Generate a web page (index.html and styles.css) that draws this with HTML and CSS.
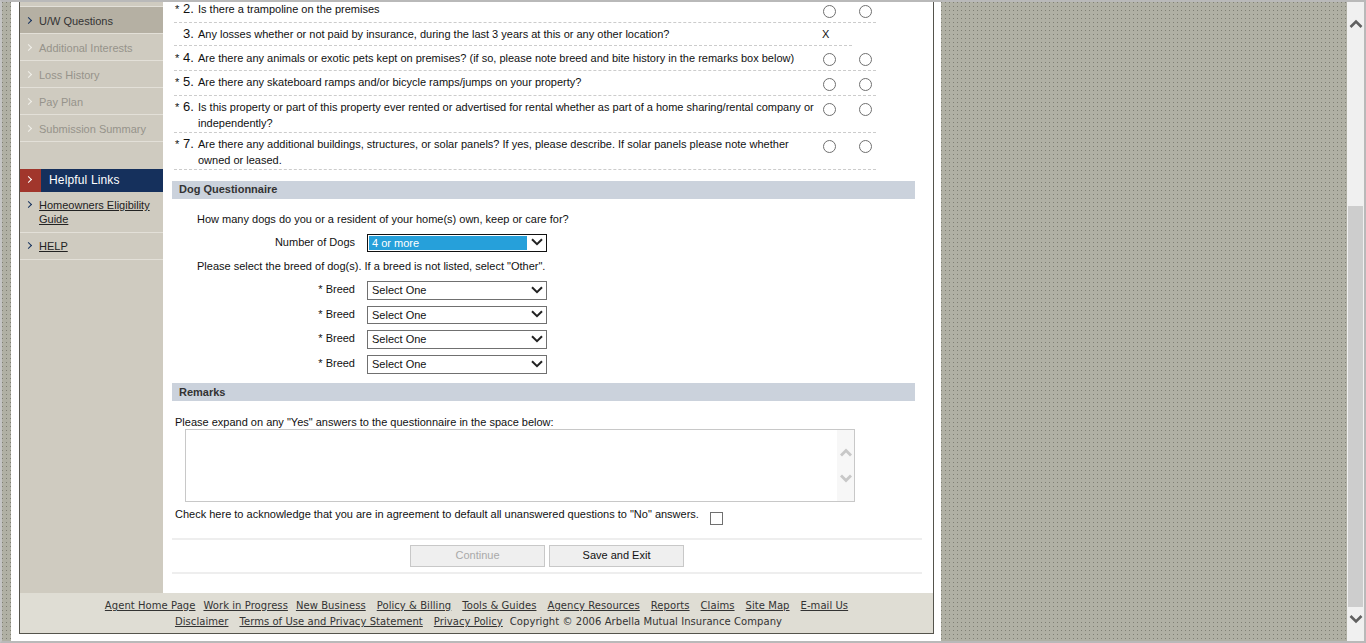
FILE: index.html
```html
<!DOCTYPE html>
<html lang="en">
<head>
  <meta charset="UTF-8">
  <title>U/W Questions</title>
  <link rel="stylesheet" href="styles.css">
</head>
<body>
  <div class="strip strip-left"></div>
  <div class="frame">
    <div class="main">
      <div class="sidebar">
        <ul class="nav">
          <li class="current"><span class="chev"></span>U/W Questions</li>
          <li class="off"><span class="chev"></span>Additional Interests</li>
          <li class="off"><span class="chev"></span>Loss History</li>
          <li class="off"><span class="chev"></span>Pay Plan</li>
          <li class="off"><span class="chev"></span>Submission Summary</li>
        </ul>
        <div class="links-head">
          <span class="links-tab"><span class="chev"></span></span>
          <span class="links-title">Helpful Links</span>
        </div>
        <ul class="links">
          <li><span class="chev"></span><a href="#">Homeowners Eligibility Guide</a></li>
          <li><span class="chev"></span><a href="#">HELP</a></li>
        </ul>
      </div>
      <div class="content">
        <div class="questions">
          <div class="q q-first"><span class="req">*</span><span class="num">2.</span><span class="q-text">Is there a trampoline on the premises</span><span class="radios"><i></i><i></i></span></div>
          <div class="q q-short"><span class="req"></span><span class="num">3.</span><span class="q-text">Any losses whether or not paid by insurance, during the last 3 years at this or any other location?</span><span class="x">X</span></div>
          <div class="q q-mid"><span class="req">*</span><span class="num">4.</span><span class="q-text">Are there any animals or exotic pets kept on premises? (if so, please note breed and bite history in the remarks box below)</span><span class="radios"><i></i><i></i></span></div>
          <div class="q"><span class="req">*</span><span class="num">5.</span><span class="q-text">Are there any skateboard ramps and/or bicycle ramps/jumps on your property?</span><span class="radios"><i></i><i></i></span></div>
          <div class="q"><span class="req">*</span><span class="num">6.</span><span class="q-text">Is this property or part of this property ever rented or advertised for rental whether as part of a home sharing/rental company or independently?</span><span class="radios"><i></i><i></i></span></div>
          <div class="q"><span class="req">*</span><span class="num">7.</span><span class="q-text">Are there any additional buildings, structures, or solar panels? If yes, please describe. If solar panels please note whether owned or leased.</span><span class="radios"><i></i><i></i></span></div>
        </div>

        <h2 class="section">Dog Questionnaire</h2>
        <p class="dog-q">How many dogs do you or a resident of your home(s) own, keep or care for?</p>
        <div class="field field-count">
          <label>Number of Dogs</label>
          <div class="fake-select focused"><span>4 or more</span><svg width="12" height="8" viewBox="0 0 12 8"><path d="M1 1.2l5 5 5-5" fill="none" stroke="#222" stroke-width="2"/></svg></div>
        </div>
        <p class="dog-q dog-breed">Please select the breed of dog(s). If a breed is not listed, select "Other".</p>
        <div class="field"><label><b class="star">*</b> Breed</label><div class="fake-select"><span>Select One</span><svg width="12" height="8" viewBox="0 0 12 8"><path d="M1 1.2l5 5 5-5" fill="none" stroke="#222" stroke-width="2"/></svg></div></div>
        <div class="field field-short"><label><b class="star">*</b> Breed</label><div class="fake-select"><span>Select One</span><svg width="12" height="8" viewBox="0 0 12 8"><path d="M1 1.2l5 5 5-5" fill="none" stroke="#222" stroke-width="2"/></svg></div></div>
        <div class="field"><label><b class="star">*</b> Breed</label><div class="fake-select"><span>Select One</span><svg width="12" height="8" viewBox="0 0 12 8"><path d="M1 1.2l5 5 5-5" fill="none" stroke="#222" stroke-width="2"/></svg></div></div>
        <div class="field"><label><b class="star">*</b> Breed</label><div class="fake-select"><span>Select One</span><svg width="12" height="8" viewBox="0 0 12 8"><path d="M1 1.2l5 5 5-5" fill="none" stroke="#222" stroke-width="2"/></svg></div></div>

        <h2 class="section section-remarks">Remarks</h2>
        <p class="expand">Please expand on any "Yes" answers to the questionnaire in the space below:</p>
        <div class="remarks">
          <div class="remarks-bar">
            <svg width="12" height="10" viewBox="0 0 12 10"><path d="M1 8.5l5-5 5 5" fill="none" stroke="#c8c8c8" stroke-width="2.8"/></svg>
            <svg width="12" height="10" viewBox="0 0 12 10"><path d="M1 1.5l5 5 5-5" fill="none" stroke="#c8c8c8" stroke-width="2.8"/></svg>
          </div>
        </div>
        <div class="ack"><span>Check here to acknowledge that you are in agreement to default all unanswered questions to "No" answers.</span><i class="checkbox"></i></div>
        <div class="actions">
          <button type="button" class="btn" disabled>Continue</button>
          <button type="button" class="btn">Save and Exit</button>
        </div>
      </div>
    </div>
    <div class="footer">
      <div class="foot-row">
        <a href="#">Agent Home Page</a><a href="#">Work in Progress</a><a href="#">New Business</a><a href="#" class="gap">Policy &amp; Billing</a><a href="#" class="gap">Tools &amp; Guides</a><a href="#" class="gap">Agency Resources</a><a href="#" class="gap">Reports</a><a href="#" class="gap">Claims</a><a href="#" class="gap">Site Map</a><a href="#" class="gap">E-mail Us</a>
      </div>
      <div class="foot-row foot-row-legal">
        <a href="#">Disclaimer</a><a href="#" class="gap">Terms of Use and Privacy Statement</a><a href="#" class="gap">Privacy Policy</a><span class="copy">Copyright © 2006 Arbella Mutual Insurance Company</span>
      </div>
    </div>
  </div>
  <div class="strip strip-right"></div>
  <div class="scrollbar">
    <svg class="arrow-up" width="14" height="10" viewBox="0 0 14 10"><path d="M1.5 8l5.5-5.5 5.5 5.5" fill="none" stroke="#606060" stroke-width="2.6"/></svg>
    <div class="track"><div class="thumb"></div></div>
    <svg class="arrow-down" width="14" height="10" viewBox="0 0 14 10"><path d="M1.5 2l5.5 5.5 5.5-5.5" fill="none" stroke="#606060" stroke-width="2.6"/></svg>
  </div>
</body>
</html>
```
FILE: styles.css
```css
html, body { margin: 0; height: 100%; overflow: hidden; }
body { display: flex; height: 643px; box-sizing: border-box; border-top: 2px solid #b9b9b9; border-bottom: 2px solid #b9b9b9; border-left: 2px solid #c4c4c4; border-right: 2px solid #b9b9b9; background: #fff; font-family: "Liberation Sans", Arial, sans-serif; font-size: 11px; color: #111; }
ul { list-style: none; margin: 0; padding: 0; }
a { color: #222; }

.strip { background-color: #b0b0a4; background-image: linear-gradient(to bottom, transparent 1px, #b0b0a4 1px), linear-gradient(to right, #7f7f74 1px, #b0b0a4 1px); background-size: 4px 4px; }
.strip-left { width: 9px; margin-right: 8px; }
.strip-right { width: 406px; margin-left: 7px; }

.frame { width: 913px; height: 631px; display: flex; flex-direction: column; flex: none; border-left: 1px solid #55544c; border-right: 1px solid #55544c; border-bottom: 1px solid #55544c; }
.main { flex: 1; display: flex; min-height: 0; }

.sidebar { width: 143px; background: #cfcbc0; padding-top: 4px; flex: none; }
.nav li { height: 26px; line-height: 28px; border-top: 1px solid #e3e0d8; padding-left: 19px; position: relative; color: #333; }
.nav li.current { background: #b5b0a3; }
.nav li.off { color: #96938b; }
.nav li:last-child { border-bottom: 1px solid #e3e0d8; }
.chev { position: absolute; left: 6px; top: 11px; width: 4px; height: 4px; border-top: 1.5px solid #15305c; border-right: 1.5px solid #15305c; transform: rotate(45deg); }
.off .chev { border-color: #f2f0ea; }

.links-head { display: flex; height: 23px; margin-top: 27px; }
.links-tab { width: 21px; background: #a1362c; position: relative; }
.links-tab .chev { border-color: #fff; top: 8px; }
.links-title { flex: 1; background: #15305c; color: #fff; font-size: 12px; letter-spacing: .15px; line-height: 23px; padding-left: 8px; }
.links li { position: relative; padding: 6px 8px 6px 19px; line-height: 14px; border-bottom: 1px solid #e3e0d8; }
.links li .chev { top: 10px; }

.content { flex: 1; padding-left: 9px; min-width: 0; }
.questions { width: 702px; margin-top: -1px; margin-left: 2px; }
.q { display: flex; border-bottom: 1px dashed #ccc; padding: 3px 0 1px; line-height: 16px; min-height: 20px; }
.q-first { min-height: 16px; padding: 0 0 4px; }
.q-short { width: 678px; min-height: 16px; padding: 3px 0; }
.q-mid { padding-top: 4px; min-height: 19px; }
.req { width: 9px; padding-left: 1px; box-sizing: border-box; flex: none; }
.num { width: 15px; flex: none; font-size: 13px; }
.q-text { width: 618px; flex: none; }
.x { margin-left: 6px; }
.radios { display: flex; align-items: flex-start; gap: 23px; margin: 4px 0 0 7px; }
.q-mid .radios { margin-top: 3px; }
.radios i { width: 11px; height: 11px; border: 1px solid #707070; border-radius: 50%; flex: none; }

.section { margin: 0; height: 18px; width: 743px; box-sizing: border-box; background: #cbd2dc; font-size: 11px; line-height: 17px; color: #333; padding-left: 7px; font-weight: bold; }
.questions + .section { margin-top: 11px; }
.dog-q { margin: 0; padding-left: 25px; line-height: 16px; }
.section + .dog-q { margin-top: 12px; }
.dog-breed { margin-top: 6px; margin-bottom: 7px; }

.field { display: flex; margin-bottom: 6px; height: 19px; }
.field label { width: 183px; text-align: right; line-height: 16px; margin-right: 12px; }
.field-count { margin-top: 7px; height: 18px; margin-bottom: 0; }
.field-short { height: 18px; }
.star { font-weight: normal; }
.fake-select { width: 180px; box-sizing: border-box; border: 1px solid #707070; padding: 0 3px 0 4px; display: flex; justify-content: space-between; align-items: center; line-height: 17px; }
.field-count .fake-select { border-color: #111; padding: 1px 3px 1px 1px; }
.focused span { width: 158px; background: #26a0da; color: #fff; padding-left: 3px; box-sizing: border-box; line-height: 14px; }
.fake-select svg { flex: none; margin-top: -2px; }

.section-remarks { margin-top: 9px; line-height: 19px; }
.expand { margin: 0; padding: 13px 0 0 3px; line-height: 16px; }
.remarks { width: 670px; height: 73px; box-sizing: border-box; margin: -1px 0 0 13px; border: 1px solid #c8c8c8; display: flex; justify-content: flex-end; }
.remarks-bar { width: 17px; background: #f7f7f7; display: flex; flex-direction: column; align-items: center; padding-top: 17px; gap: 17px; }
.ack { display: flex; padding: 4px 0 0 3px; line-height: 16px; height: 36px; box-sizing: border-box; }
.checkbox { width: 11px; height: 11px; border: 1px solid #707070; margin: 6px 0 0 11px; flex: none; }
.actions { width: 750px; height: 36px; box-sizing: border-box; border-top: 2px solid #eee; border-bottom: 2px solid #eee; padding: 5px 0; display: flex; justify-content: center; gap: 4px; }
.btn { width: 135px; height: 22px; border: 1px solid #c8c8c8; background: #efefef; font-family: "Liberation Sans", Arial, sans-serif; font-size: 11px; color: #111; padding: 0 0 2px; }
.btn:disabled { color: #a9a9a9; }

.footer { height: 40px; background: #dfddd4; padding-top: 5px; box-sizing: border-box; flex: none; font-family: "DejaVu Sans", Verdana, sans-serif; font-size: 10px; letter-spacing: .06px; line-height: 16px; color: #333; }
.foot-row { display: flex; justify-content: center; gap: 8px; }
.foot-row a { color: #333; }
.foot-row .gap { margin-left: 3px; }
.foot-row-legal { padding-left: 4px; }
.foot-row-legal .copy { margin-left: -1px; }

.scrollbar { width: 17px; background: #f0f0f0; display: flex; flex-direction: column; align-items: center; flex: none; }
.arrow-up { margin-top: 17px; flex: none; }
.arrow-down { margin: 7px 0 17px; flex: none; }
.track { flex: 1; width: 100%; display: flex; flex-direction: column; justify-content: flex-end; align-items: center; }
.thumb { height: 401px; width: 15px; background: #cdcdcd; }
```
